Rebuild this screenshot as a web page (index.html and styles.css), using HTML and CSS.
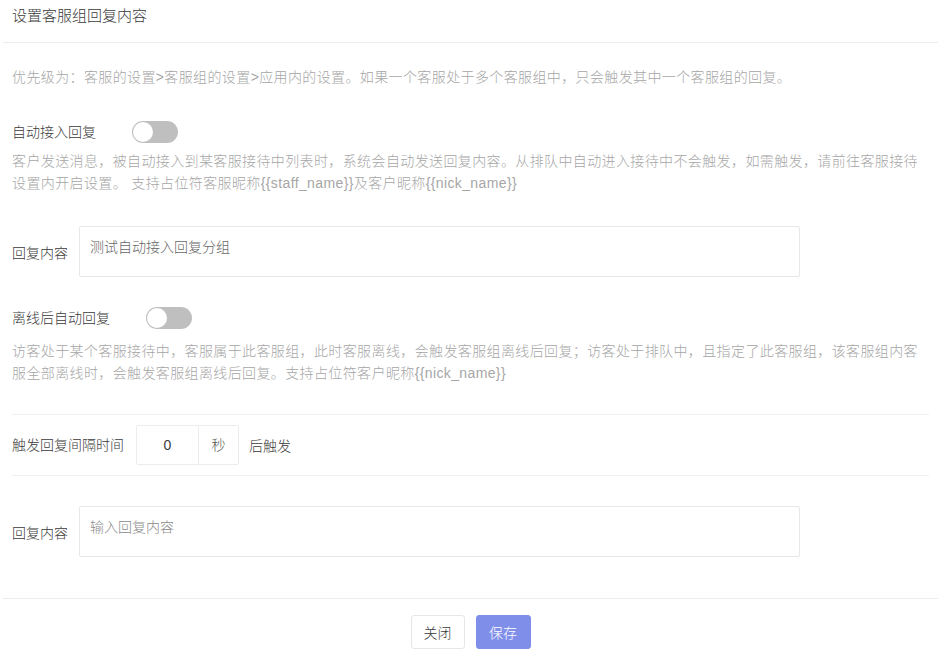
FILE: index.html
```html
<!DOCTYPE html>
<html lang="zh-CN">
<head>
<meta charset="utf-8">
<title>设置客服组回复内容</title>
<link rel="stylesheet" href="styles.css">
</head>
<body>
<div class="modal">
  <div class="modal-header">设置客服组回复内容</div>
  <div class="modal-body">
    <p class="desc desc-priority">优先级为：客服的设置&gt;客服组的设置&gt;应用内的设置。如果一个客服处于多个客服组中，只会触发其中一个客服组的回复。</p>

    <div class="switch-row row-auto">
      <span class="label">自动接入回复</span>
      <span class="switch"><span class="knob"></span></span>
    </div>
    <p class="desc desc-auto">客户发送消息，被自动接入到某客服接待中列表时，系统会自动发送回复内容。从排队中自动进入接待中不会触发，如需触发，请前往客服接待设置内开启设置。 支持占位符客服昵称{{staff_name}}及客户昵称{{nick_name}}</p>

    <div class="field-row row-reply1">
      <span class="field-label">回复内容</span>
      <textarea class="textarea">测试自动接入回复分组</textarea>
    </div>

    <div class="switch-row row-offline">
      <span class="label">离线后自动回复</span>
      <span class="switch"><span class="knob"></span></span>
    </div>
    <p class="desc desc-offline">访客处于某个客服接待中，客服属于此客服组，此时客服离线，会触发客服组离线后回复；访客处于排队中，且指定了此客服组，该客服组内客服全部离线时，会触发客服组离线后回复。支持占位符客户昵称{{nick_name}}</p>

    <div class="interval-row">
      <span class="label">触发回复间隔时间</span>
      <div class="number-box">
        <span class="number-value">0</span>
        <span class="number-unit">秒</span>
      </div>
      <span class="after">后触发</span>
    </div>

    <div class="field-row row-reply2">
      <span class="field-label">回复内容</span>
      <textarea class="textarea" placeholder="输入回复内容"></textarea>
    </div>
  </div>
  <div class="modal-footer">
    <button class="btn btn-default">关闭</button>
    <button class="btn btn-primary">保存</button>
  </div>
</div>
</body>
</html>
```

FILE: styles.css
```css
* { box-sizing: border-box; }

html, body {
  margin: 0;
  padding: 0;
  background: #fff;
}

body {
  font-family: "Liberation Sans", "Noto Sans CJK SC", sans-serif;
  font-size: 14px;
  font-weight: 300;
  color: #3a3a3a;
}

.modal {
  width: 935px;
  margin-left: 3px;
}

.modal-header {
  height: 43px;
  padding: 0 9px;
  line-height: 32px;
  font-size: 15px;
  color: #3a3a3a;
  border-bottom: 1px solid #ececec;
}

.modal-body {
  padding: 0 9px;
}

.desc {
  margin: 0;
  font-size: 14px;
  line-height: 22px;
  letter-spacing: 0.38px;
  color: #a6a6a6;
}

.desc-priority { margin-top: 23px; }

.switch-row {
  display: flex;
  align-items: center;
  height: 22px;
}

.row-auto { margin-top: 33px; }
.row-offline { margin-top: 30px; }

.label {
  font-size: 14px;
  line-height: 22px;
  color: #3a3a3a;
}

.switch {
  position: relative;
  display: inline-block;
  width: 46px;
  height: 22px;
  margin-left: 36px;
  border-radius: 11px;
  background: #bfbfbf;
}

.knob {
  position: absolute;
  left: 1px;
  top: 1px;
  width: 20px;
  height: 20px;
  border-radius: 50%;
  background: #fff;
}

.desc-auto { margin-top: 7px; }
.desc-offline { margin-top: 11px; }

.field-row {
  display: flex;
  align-items: center;
}

.row-reply1 { margin-top: 32px; }
.row-reply2 { margin-top: 30px; }

.field-label {
  width: 67px;
  font-size: 14px;
  color: #3a3a3a;
}

.textarea {
  display: block;
  width: 721px;
  height: 51px;
  margin: 0;
  padding: 9px 10px;
  border: 1px solid #e8e8e8;
  border-radius: 2px;
  font-family: inherit;
  font-size: 14px;
  font-weight: 300;
  line-height: 22px;
  color: #666;
  resize: none;
  overflow: hidden;
  outline: none;
}

.textarea::placeholder { color: #8a8a8a; }

.interval-row {
  display: flex;
  align-items: center;
  margin-top: 30px;
  padding: 10px 0;
  border-top: 1px solid #f0f0f0;
  border-bottom: 1px solid #f0f0f0;
}

.number-box {
  display: flex;
  height: 40px;
  margin-left: 12px;
  border: 1px solid #ececec;
  border-radius: 2px;
}

.number-value {
  width: 62px;
  border-right: 1px solid #ececec;
  line-height: 38px;
  text-align: center;
  color: #3a3a3a;
}

.number-unit {
  width: 39px;
  line-height: 38px;
  text-align: center;
  color: #555;
}

.after {
  margin-left: 10px;
  color: #3a3a3a;
}

.modal-footer {
  display: flex;
  justify-content: center;
  gap: 11px;
  margin-top: 41px;
  padding-top: 16px;
  border-top: 1px solid #ececec;
}

.btn {
  height: 34px;
  padding: 0 12px;
  border-radius: 3px;
  font-family: inherit;
  font-size: 14px;
  font-weight: 300;
  cursor: pointer;
}

.btn-default {
  width: 54px;
  background: #fff;
  border: 1px solid #e6e6e6;
  color: #3a3a3a;
}

.btn-primary {
  width: 55px;
  background: #7f8ee9;
  border: 1px solid #7f8ee9;
  color: #fff;
}
```
